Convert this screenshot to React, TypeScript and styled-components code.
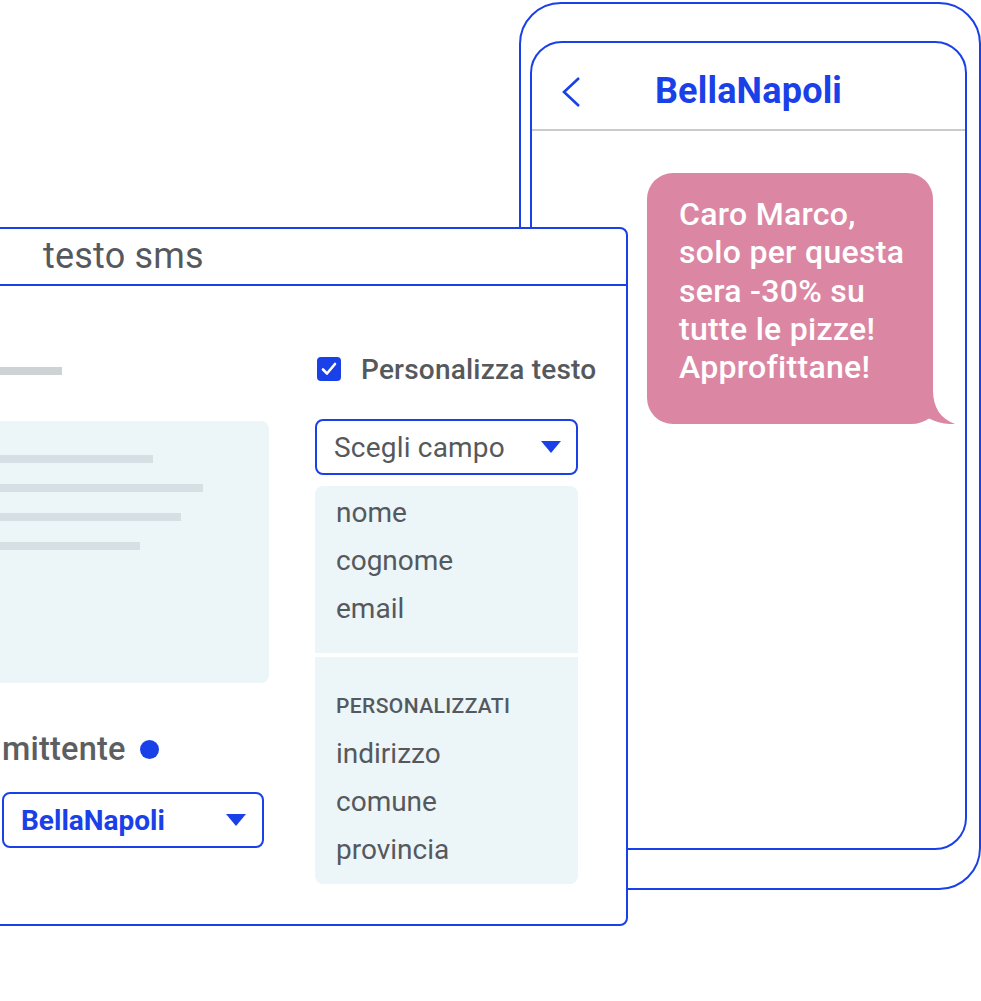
import React from "react";
import styled, { createGlobalStyle } from "styled-components";

const BLUE = "#1a40e8";
const TEXT = "#55595d";
const PALE = "#ecf5f8";
const PINK = "#db87a4";

const GlobalStyle = createGlobalStyle`
  html, body {
    margin: 0;
    padding: 0;
    background: #ffffff;
  }
  body {
    font-family: Roboto, "Liberation Sans", sans-serif;
    overflow: hidden;
  }
`;

const Canvas = styled.div`
  position: relative;
  width: 981px;
  height: 1001px;
  overflow: hidden;
  background: #ffffff;
`;

/* phone */

const Phone = styled.div`
  position: absolute;
  left: 519px;
  top: 2px;
  width: 462px;
  height: 888px;
  box-sizing: border-box;
  border: 2px solid ${BLUE};
  border-radius: 42px;
  padding: 37px 12px 38px 9px;
  display: flex;
`;

const Screen = styled.div`
  flex: 1;
  border: 2px solid ${BLUE};
  border-radius: 32px;
  display: flex;
  flex-direction: column;
`;

const PhoneHeader = styled.div`
  height: 86px;
  border-bottom: 2px solid #cbcbcb;
  display: flex;
  align-items: center;
  justify-content: center;
  position: relative;
`;

const Back = styled.svg`
  position: absolute;
  left: 29px;
  top: 33px;
`;

const Title = styled.div`
  font-size: 36px;
  font-weight: 700;
  color: ${BLUE};
  letter-spacing: 0.2px;
  margin-top: 9px;
`;

const Thread = styled.div`
  display: flex;
  justify-content: flex-end;
  padding: 42px 32px 0 0;
`;

const Bubble = styled.div`
  position: relative;
  width: 286px;
  box-sizing: border-box;
  padding: 22px 10px 38px 32px;
  background: ${PINK};
  border-radius: 26px;
  color: #ffffff;
  font-size: 32px;
  font-weight: 500;
  line-height: 38.3px;
  letter-spacing: 0.3px;
  white-space: nowrap;
`;

const Tail = styled.svg`
  position: absolute;
  right: -24px;
  bottom: 0;
`;

/* panel */

const Panel = styled.div`
  position: absolute;
  left: -40px;
  top: 227px;
  width: 668px;
  height: 699px;
  box-sizing: border-box;
  border: 2px solid ${BLUE};
  border-radius: 8px;
  background: #ffffff;
  display: flex;
  flex-direction: column;
`;

const PanelHeader = styled.div`
  height: 56px;
  border-bottom: 2px solid ${BLUE};
  padding-left: 81px;
  display: flex;
  align-items: center;
  font-size: 36px;
  color: ${TEXT};
  letter-spacing: 0.2px;
  margin-top: -1px;
`;

const Body = styled.div`
  display: grid;
  grid-template-columns: 269px 263px;
  column-gap: 46px;
  padding-left: 38px;
`;

const LeftCol = styled.div`
  display: flex;
  flex-direction: column;
  padding-top: 81px;
`;

const Bar = styled.div<{ $w: number; $color?: string; $shift?: number }>`
  height: 8px;
  width: ${(p) => p.$w}px;
  margin-left: ${(p) => p.$shift || 0}px;
  background: ${(p) => p.$color || "#d6dfe3"};
`;

const TextBox = styled.div`
  margin: 46px 0 0 -30px;
  height: 262px;
  background: ${PALE};
  border-radius: 8px;
  box-sizing: border-box;
  padding-top: 34px;
  display: flex;
  flex-direction: column;
  gap: 21px;
`;

const Label = styled.div`
  margin-top: 46px;
  height: 40px;
  display: flex;
  align-items: center;
  font-size: 32.5px;
  font-weight: 500;
  color: #5c5e60;
  margin-left: 2px;
  letter-spacing: 0.2px;
`;

const Dot = styled.span`
  width: 19px;
  height: 19px;
  border-radius: 50%;
  background: ${BLUE};
  margin-left: 14px;
`;

const Select = styled.div<{ $bold?: boolean }>`
  height: 56px;
  box-sizing: border-box;
  border: 2px solid ${BLUE};
  border-radius: 8px;
  display: flex;
  align-items: center;
  justify-content: space-between;
  padding: 0 15px 0 17px;
  font-size: 28px;
  font-weight: ${(p) => (p.$bold ? 700 : 400)};
  color: ${(p) => (p.$bold ? BLUE : TEXT)};
  letter-spacing: ${(p) => (p.$bold ? 0 : 0.2)}px;
`;

const SenderSelect = styled(Select)`
  margin: 23px 0 0 2px;
  width: 262px;
  padding-right: 16px;
`;

const Caret = styled.span`
  width: 0;
  height: 0;
  border-left: 10.5px solid transparent;
  border-right: 10.5px solid transparent;
  border-top: 12px solid ${BLUE};
`;

const RightCol = styled.div`
  display: flex;
  flex-direction: column;
  padding-top: 68px;
`;

const CheckRow = styled.div`
  height: 30px;
  display: flex;
  align-items: center;
  gap: 20px;
  padding-left: 2px;
  font-size: 28px;
  font-weight: 500;
  color: ${TEXT};
  letter-spacing: 0.2px;
  white-space: nowrap;
  margin-bottom: 35px;
`;

const Check = styled.span`
  flex: none;
  width: 24px;
  height: 24px;
  border-radius: 4px;
  background: ${BLUE};
  display: flex;
  align-items: center;
  justify-content: center;
`;

const Menu = styled.div`
  margin-top: 11px;
  display: flex;
  flex-direction: column;
  gap: 4px;
`;

const MenuGroup = styled.div<{ $top: number; $bottom: number }>`
  background: ${PALE};
  padding: ${(p) => p.$top}px 20px ${(p) => p.$bottom}px 21px;
  border-radius: ${(p) => (p.$top < 10 ? "8px 8px 0 0" : "0 0 8px 8px")};
`;

const Item = styled.div`
  height: 48px;
  line-height: 48px;
  font-size: 28px;
  color: ${TEXT};
`;

const GroupTitle = styled(Item)`
  font-size: 21px;
  font-weight: 500;
  letter-spacing: 0.4px;
  text-transform: uppercase;
`;

export default function App() {
  return (
    <Canvas>
      <GlobalStyle />
      <Phone>
        <Screen>
          <PhoneHeader>
            <Back width="20" height="32" viewBox="0 0 20 32">
              <polyline
                points="18,2 3,16 18,30"
                fill="none"
                stroke={BLUE}
                strokeWidth="2.6"
              />
            </Back>
            <Title>BellaNapoli</Title>
          </PhoneHeader>
          <Thread>
            <Bubble>
              Caro Marco,
              <br />
              solo per questa
              <br />
              sera -30% su
              <br />
              tutte le pizze!
              <br />
              Approfittane!
              <Tail width="52" height="36" viewBox="0 0 52 36">
                <path
                  d="M2 36 L2 2 L28 2 C28 20 36 31 50 36 C40 36.5 31 34 24 30.5 C19 34 13 36 6 36 Z"
                  fill={PINK}
                />
              </Tail>
            </Bubble>
          </Thread>
        </Screen>
      </Phone>

      <Panel>
        <PanelHeader>testo sms</PanelHeader>
        <Body>
          <LeftCol>
            <Bar $w={92} $shift={-30} $color="#cdd2d5" />
            <TextBox>
              <Bar $w={183} />
              <Bar $w={233} />
              <Bar $w={211} />
              <Bar $w={170} />
            </TextBox>
            <Label>
              mittente
              <Dot />
            </Label>
            <SenderSelect $bold>
              BellaNapoli
              <Caret />
            </SenderSelect>
          </LeftCol>

          <RightCol>
            <CheckRow>
              <Check>
                <svg width="16" height="14" viewBox="0 0 16 14">
                  <polyline
                    points="2,7.5 6,11.5 14,2"
                    fill="none"
                    stroke="#ffffff"
                    strokeWidth="2.6"
                    strokeLinecap="round"
                    strokeLinejoin="round"
                  />
                </svg>
              </Check>
              Personalizza testo
            </CheckRow>
            <Select>
              Scegli campo
              <Caret />
            </Select>
            <Menu>
              <MenuGroup $top={3} $bottom={20}>
                <Item>nome</Item>
                <Item>cognome</Item>
                <Item>email</Item>
              </MenuGroup>
              <MenuGroup $top={25} $bottom={10}>
                <GroupTitle>Personalizzati</GroupTitle>
                <Item>indirizzo</Item>
                <Item>comune</Item>
                <Item>provincia</Item>
              </MenuGroup>
            </Menu>
          </RightCol>
        </Body>
      </Panel>
    </Canvas>
  );
}
